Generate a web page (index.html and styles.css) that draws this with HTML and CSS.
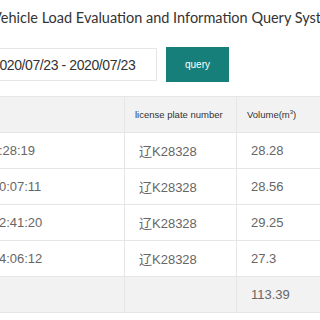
FILE: index.html
```html
<!DOCTYPE html>
<html lang="en">
<head>
    <meta charset="UTF-8">
    <title>Vehicle Load Evaluation and Information Query System</title>
    <link rel="stylesheet" href="styles.css">
</head>
<body>
    <h2 class="title">Vehicle Load Evaluation and Information Query System</h2>

    <div class="search">
        <div class="range">2020/07/23 - 2020/07/23</div>
        <button type="button" class="query">query</button>
    </div>

    <table class="records">
        <tr class="head">
            <th class="col-time">time</th>
            <th class="col-plate">license plate number</th>
            <th class="col-volume">Volume(m<sup>3</sup>)</th>
        </tr>
        <tr>
            <td>2020/07/23 8:28:19</td>
            <td>辽K28328</td>
            <td>28.28</td>
        </tr>
        <tr>
            <td>2020/07/23 10:07:11</td>
            <td>辽K28328</td>
            <td>28.56</td>
        </tr>
        <tr>
            <td>2020/07/23 12:41:20</td>
            <td>辽K28328</td>
            <td>29.25</td>
        </tr>
        <tr>
            <td>2020/07/23 14:06:12</td>
            <td>辽K28328</td>
            <td>27.3</td>
        </tr>
        <tr class="total">
            <td></td>
            <td></td>
            <td>113.39</td>
        </tr>
    </table>
</body>
</html>
```

FILE: styles.css
```css
body {
    margin: 0;
    font-family: "Liberation Sans", "Noto Sans CJK SC", Arial, sans-serif;
    background-color: #ffffff;
    overflow: hidden;
}
.title {
    margin: 7px 0 0 -8px;
    font-family: Lato, "Liberation Sans", sans-serif;
    font-weight: normal;
    font-size: 14.5px;
    letter-spacing: 0;
    line-height: 22px;
    color: #333333;
    white-space: nowrap;
}
.search {
    display: flex;
    align-items: center;
    gap: 9px;
    margin: 18px 0 0 -30px;
}
.range {
    width: 187px;
    height: 33px;
    box-sizing: border-box;
    padding-left: 21px;
    border: 1px solid #e6e6e6;
    display: flex;
    align-items: center;
    font-size: 14px;
    letter-spacing: -0.4px;
    color: #333333;
    white-space: nowrap;
}
.query {
    width: 63px;
    height: 35px;
    border: none;
    background-color: #177f79; /* teal */
    color: #ffffff;
    font-family: "Liberation Sans", sans-serif;
    font-size: 10px;
    padding: 0;
}
.records {
    margin: 14px 0 0 -92px;
    border-collapse: collapse;
    width: 540px;
    table-layout: fixed;
}
.records th,
.records td {
    height: 35px;
    padding: 0 0 0 14px;
    border: 1px solid #e6e6e6;
    text-align: left;
    white-space: nowrap;
}
.records th {
    padding-left: 10px;
    font-weight: normal;
    font-size: 9.5px;
    color: #333333;
}
.records td {
    font-size: 13px;
    color: #666666;
}
.records sup {
    font-size: 6px;
}
.col-time {
    width: 205px;
}
.col-plate {
    width: 101px;
}
.head,
.total {
    background-color: #f2f2f2;
}
```
